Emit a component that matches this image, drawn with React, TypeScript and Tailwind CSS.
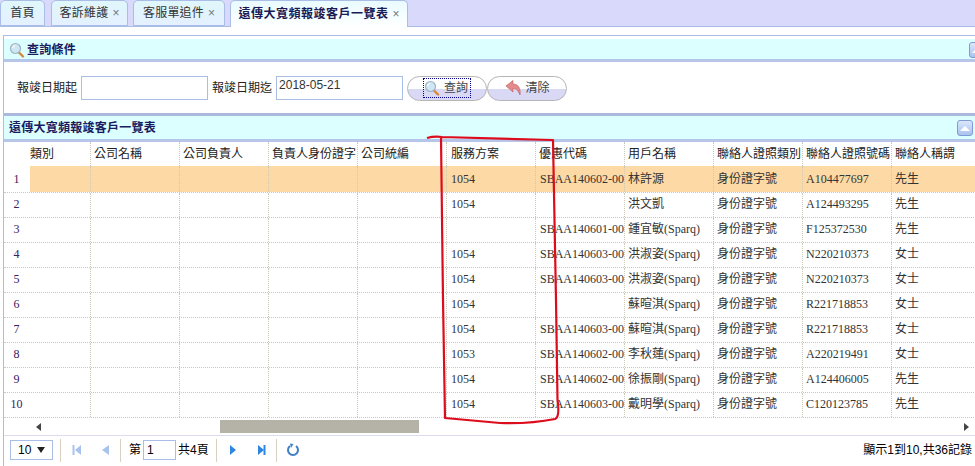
const F = '"Liberation Sans","Noto Sans CJK TC",sans-serif';
const S = '"Liberation Serif","Noto Sans CJK TC",serif';

const cols = [
  { t: '類別', w: 61 }, { t: '公司名稱', w: 89 }, { t: '公司負責人', w: 89 }, { t: '負責人身份證字', w: 89 },
  { t: '公司統編', w: 89 }, { t: '服務方案', w: 89 }, { t: '優惠代碼', w: 89 }, { t: '用戶名稱', w: 89 },
  { t: '聯絡人證照類別', w: 89 }, { t: '聯絡人證照號碼', w: 89 }, { t: '聯絡人稱謂', w: 84 },
];
const rows = [
  ['1054', 'SBAA140602-00', '林許源', 'A104477697', '先生'],
  ['1054', '', '洪文凱', 'A124493295', '先生'],
  ['', 'SBAA140601-00', '鍾宜敏(Sparq)', 'F125372530', '先生'],
  ['1054', 'SBAA140603-00', '洪淑姿(Sparq)', 'N220210373', '女士'],
  ['1054', 'SBAA140603-00', '洪淑姿(Sparq)', 'N220210373', '女士'],
  ['1054', '', '蘇暄淇(Sparq)', 'R221718853', '女士'],
  ['1054', 'SBAA140603-00', '蘇暄淇(Sparq)', 'R221718853', '女士'],
  ['1053', 'SBAA140602-00', '李秋蓮(Sparq)', 'A220219491', '女士'],
  ['1054', 'SBAA140602-00', '徐振剛(Sparq)', 'A124406005', '先生'],
  ['1054', 'SBAA140603-00', '戴明學(Sparq)', 'C120123785', '先生'],
];

function Search({ size = 16 }: { size?: number }) {
  return (
    <svg width={size} height={size} viewBox="0 0 16 16" className="shrink-0">
      <path d="M9.5 10 L14 14.5" stroke="#d9873a" strokeWidth="2.4" strokeLinecap="round" />
      <circle cx="6.5" cy="6.5" r="5" fill="#cfe6f5" stroke="#9fb4c4" strokeWidth="1.2" />
      <path d="M3.5 6 A3 3 0 0 1 6 3.5" stroke="#fff" strokeWidth="1.2" fill="none" />
    </svg>
  );
}

function Tab({ label, close, active, cls }: { label: string; close?: boolean; active?: boolean; cls: string }) {
  return (
    <div className={`flex items-center justify-center gap-[4px] rounded-t-[5px] border border-[#a9bde6] ${cls} ${active ? 'h-[27px] border-b-0 bg-gradient-to-b from-[#e9fbff] to-white font-bold text-[#1a1a55]' : 'h-[26px] bg-gradient-to-b from-[#dff7fb] to-[#e4f0ff] text-[#333]'}`}>
      <span className={`text-[12px] ${active ? 'tracking-[0.5px]' : 'tracking-[0.2px]'}`}>{label}</span>
      {close && <span className="text-[12px] font-normal leading-none text-[#777]">×</span>}
    </div>
  );
}

function Collapse({ className }: { className: string }) {
  return (
    <div className={`flex h-[16px] w-[16px] items-center justify-center rounded-[3px] border border-[#7f9ad6] bg-gradient-to-b from-[#dbe7fb] to-[#a9c3ee] ${className}`}>
      <div className="h-0 w-0 border-x-[5px] border-b-[5px] border-x-transparent border-b-white" />
    </div>
  );
}

function PillButton({ children, w }: { children: React.ReactNode; w: string }) {
  return (
    <div className={`relative flex h-[25px] items-center justify-center overflow-hidden rounded-full border border-[#b5b5b5] bg-gradient-to-b from-white from-50% to-[#d9d9f5] to-50% text-[12px] text-[#444] ${w}`}>
      {children}
    </div>
  );
}

function Sep() {
  return <div className="ml-[7px] mr-[8px] h-[23px] w-px bg-[#d8d2c2]" />;
}

function Tri({ dir, color, bar }: { dir: 'l' | 'r'; color: string; bar?: boolean }) {
  return (
    <svg width="16" height="16" viewBox="0 0 16 16">
      {dir === 'l' ? (
        <>
          <path d={bar ? 'M12 3 V13 L6 8 Z' : 'M12 3 V13 L5 8 Z'} fill={color} />
          {bar && <rect x="3.5" y="3" width="2" height="10" fill={color} />}
        </>
      ) : (
        <>
          <path d="M5 3 V13 L11 8 Z" fill={color} />
          {bar && <rect x="10.5" y="3" width="2" height="10" fill={color} />}
        </>
      )}
    </svg>
  );
}

export default function App() {
  return (
    <div className="relative h-[466px] w-[975px] overflow-hidden bg-white text-[12px] text-black" style={{ fontFamily: F }}>
      {/* tabs */}
      <div className="flex h-[27px] items-start border-b border-[#a9bde6] bg-[#d9d9fb]">
        <Tab label="首頁" cls="w-[45px]" />
        <Tab label="客訴維護" close cls="ml-[6px] w-[77px]" />
        <Tab label="客服單追件" close cls="ml-[5px] w-[92px]" />
        <Tab label="遠傳大寬頻報竣客戶一覽表" close active cls="ml-[5px] w-[178px]" />
      </div>

      {/* query panel */}
      <div className="ml-[3px] mt-[8px] w-[990px] border-l border-t border-[#a9bde6] pt-[3px]">
        <div className="relative">
          <div className="flex h-[23px] items-center border-b-[3px] border-[#b6c6ea] bg-[#dcffff] pl-[5px] pt-[1px] text-[12px] font-bold tracking-[0.25px] text-[#1a1a60]">
            <Search />
            <span className="ml-[2px]">查詢條件</span>
          </div>
          <Collapse className="absolute left-[965px] top-[3px]" />
        </div>
        <div className="flex h-[51px] items-center pl-[13px] pt-[1px]">
          <span className="text-[12px] text-[#222]">報竣日期起</span>
          <div className="ml-[4px] h-[24px] w-[127px] border border-[#a9bde6] bg-white" />
          <span className="ml-[4px] text-[12px] text-[#222]">報竣日期迄</span>
          <div className="ml-[4px] h-[24px] w-[127px] border border-[#a9bde6] bg-white pl-[2px] text-[12px] leading-[16px] text-[#333]">2018-05-21</div>
          <div className="ml-[4px] flex">
            <PillButton w="w-[80px]">
              <span className="flex items-center gap-[4px] pr-[2px] outline-1 outline-dotted outline-[#00008b]">
                <Search />
                <span>查詢</span>
              </span>
            </PillButton>
            <PillButton w="w-[80px]">
              <span className="flex items-center gap-[3px]">
                <svg width="18" height="18" viewBox="0 0 18 18">
                  <path d="M1 7 L8 1.5 V5 C13 5 16 9 15 16 C13 11 11 9.5 8 9.5 V13 Z" fill="#e58a8a" stroke="#b85a5a" strokeWidth="0.6" />
                </svg>
                <span>清除</span>
              </span>
            </PillButton>
          </div>
        </div>
      </div>

      {/* grid panel */}
      <div className="ml-[3px] w-[975px] border-l border-[#a9bde6]">
        <div className="relative border-t-[3px] border-[#aab9dd]">
          <div className="flex h-[26px] items-center border-b-[3px] border-[#b6c6ea] bg-[#dcffff] pl-[5px] pt-[1px] text-[12px] font-bold tracking-[0.25px] text-[#1a1a60]">
            遠傳大寬頻報竣客戶一覽表
          </div>
          <Collapse className="absolute left-[953px] top-[4px]" />
        </div>

        <div className="flex h-[24px] items-center">
          <div className="w-[26px] shrink-0" />
          {cols.map((c, j) => (
            <div key={c.t} className={`flex h-full shrink-0 items-center overflow-hidden whitespace-nowrap border-r border-dotted border-[#ccc8b8] text-[#222] ${j === 0 ? 'pl-0' : j === 5 ? 'pl-[4px]' : 'pl-[3px]'}`} style={{ width: c.w }}>
              <span>{c.t}</span>
            </div>
          ))}
        </div>

        {rows.map((r, i) => {
          const cells = ['', '', '', '', '', r[0], r[1], r[2], '身份證字號', r[3], r[4]];
          return (
            <div key={i} className={`flex ${i === 0 ? 'h-[26px] bg-[#fdd9a5]' : 'h-[25px] border-t border-dotted border-[#ccc8b8]'}`}>
              <div className={`flex w-[26px] shrink-0 items-center justify-center bg-white pr-[1px] text-[12px] text-[#3a2060] ${i === 0 ? 'pb-0' : 'pb-[2px]'}`} style={{ fontFamily: S }}>{i + 1}</div>
              {cells.map((c, j) => (
                <div key={j} className={`flex h-full shrink-0 items-center overflow-hidden whitespace-nowrap border-r border-dotted border-[#ccc8b8] text-[12px] text-[#333] ${i === 0 ? 'pb-0' : 'pb-[2px]'} ${j === 5 || j === 6 ? 'pl-[4px]' : 'pl-[3px]'}`} style={{ width: cols[j].w, fontFamily: S }}>
                  {c}
                </div>
              ))}
            </div>
          );
        })}

        {/* scrollbar */}
        <div className="flex h-[18px] items-center border-t border-dotted border-[#ccc8b8]">
          <div className="ml-[32px] h-0 w-0 border-y-[4px] border-r-[5px] border-y-transparent border-r-[#444]" />
          <div className="ml-[179px] h-[13px] w-[199px] bg-[#b5b3a8]" />
          <div className="ml-[545px] h-0 w-0 border-y-[4px] border-l-[5px] border-y-transparent border-l-[#444]" />
        </div>

        {/* pager */}
        <div className="flex h-[31px] items-center border-t border-[#dcdcf0] pb-[2px] pl-[6px]">
          <div className="flex h-[20px] w-[43px] items-center justify-between border border-[#a9bde6] px-[7px] text-[12px]">
            <span>10</span>
            <span className="h-0 w-0 border-x-[4px] border-t-[6px] border-x-transparent border-t-[#222]" />
          </div>
          <Sep />
          <Tri dir="l" bar color="#a9c3ee" />
          <div className="w-[12px]" />
          <Tri dir="l" color="#a9c3ee" />
          <Sep />
          <span>第</span>
          <div className="mx-[2px] flex h-[20px] w-[33px] items-center border border-[#a9bde6] pl-[3px]">1</div>
          <span>共4頁</span>
          <Sep />
          <Tri dir="r" color="#2f86e0" />
          <div className="w-[12px]" />
          <Tri dir="r" bar color="#2f86e0" />
          <Sep />
          <svg width="16" height="16" viewBox="0 0 16 16">
            <path d="M5 4 A5 5 0 1 0 11 4" fill="none" stroke="#3f7fc4" strokeWidth="2" />
            <path d="M5 1.5 L8.5 2 L6 6 Z" fill="#3f7fc4" />
          </svg>
          <span className="absolute right-[3px] text-[12px]">顯示1到10,共36記錄</span>
        </div>
      </div>

      {/* hand-drawn annotation */}
      <svg className="pointer-events-none absolute left-0 top-0" width="975" height="466" viewBox="0 0 975 466">
        <path
          d="M427 138 Q434 136 442 137 L553 140 L556 300 L557.5 400 Q560 417 555 419 Q530 424 500 423 L445 418 L443 300 L441 137"
          fill="none" stroke="#dd0c1c" strokeWidth="2.2" strokeLinejoin="round"
        />
      </svg>
    </div>
  );
}
